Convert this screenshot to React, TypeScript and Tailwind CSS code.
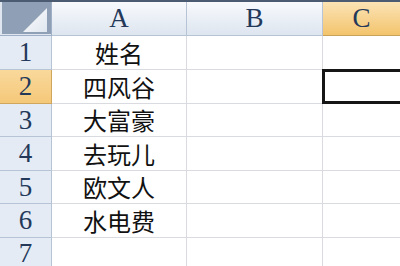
import React from 'react';

const names = ['姓名', '四风谷', '大富豪', '去玩儿', '欧文人', '水电费', ''];
const heights = ['h-[34px]', 'h-[34px]', 'h-[33px]', 'h-[34px]', 'h-[33px]', 'h-[34px]', 'h-[32px]'];

const serif = "font-['Liberation_Serif',serif]";
const cjk = "font-['Noto_Sans_CJK_SC',sans-serif]";

const ColHeader: React.FC<{ label: string; active?: boolean; className?: string }> = ({ label, active, className }) => (
  <div
    className={`flex items-center justify-center border-b border-r text-[27px] leading-none text-[#24395a] ${serif} ${
      active
        ? 'bg-gradient-to-b from-[#fbe3b4] to-[#f3c46c] border-[#c9a25a]'
        : 'bg-gradient-to-b from-[#f8fafd] to-[#dde5ef] border-[#b6c4d6]'
    } ${className ?? ''}`}
  >
    {label}
  </div>
);

export default function App() {
  return (
    <div className="w-[400px] h-[266px] overflow-hidden bg-white">
      <div className="h-[2px] bg-[#4a5b72]" />
      <div className="flex h-[34px]">
        <div className="relative w-[52px] shrink-0 border-b border-r border-[#9fb0c6] bg-[#dfe6ef] pl-[2px] pb-px">
          <div className="h-full bg-[#8f9fb5]">
            <svg width="50" height="32" viewBox="0 0 50 32" className="block">
              <defs>
                <linearGradient id="tri" x1="0" y1="0" x2="1" y2="1">
                  <stop offset="0" stopColor="#ffffff" />
                  <stop offset="1" stopColor="#dfe6ef" />
                </linearGradient>
              </defs>
              <polygon points="45,6 45,30 21,30" fill="url(#tri)" />
            </svg>
          </div>
        </div>
        <ColHeader label="A" className="w-[135px] shrink-0" />
        <ColHeader label="B" className="w-[136px] shrink-0" />
        <ColHeader label="C" active className="flex-1 border-r-0" />
      </div>
      {names.map((name, i) => {
        const row = i + 1;
        const active = row === 2;
        return (
          <div key={row} className={`flex ${heights[i]}`}>
            <div
              className={`flex w-[52px] shrink-0 items-center justify-center border-b border-r text-[27px] leading-none text-[#24395a] ${serif} ${
                active
                  ? 'bg-gradient-to-b from-[#f9d99c] to-[#f5c879] border-[#d0a55c]'
                  : 'bg-[#e4ebf5] border-[#b6c4d6]'
              }`}
            >
              {row}
            </div>
            <div className={`flex w-[135px] shrink-0 items-center justify-center border-b border-r border-[#d9dbe0] text-[24px] leading-none text-[#111] ${cjk}`}>
              {name}
            </div>
            <div className="w-[136px] shrink-0 border-b border-r border-[#d9dbe0]" />
            <div className="relative flex-1 border-b border-[#d9dbe0]">
              {active && <div className="absolute -top-px left-[-1px] -right-2 bottom-[-1px] border-[3px] border-[#161616]" />}
            </div>
          </div>
        );
      })}
    </div>
  );
}
